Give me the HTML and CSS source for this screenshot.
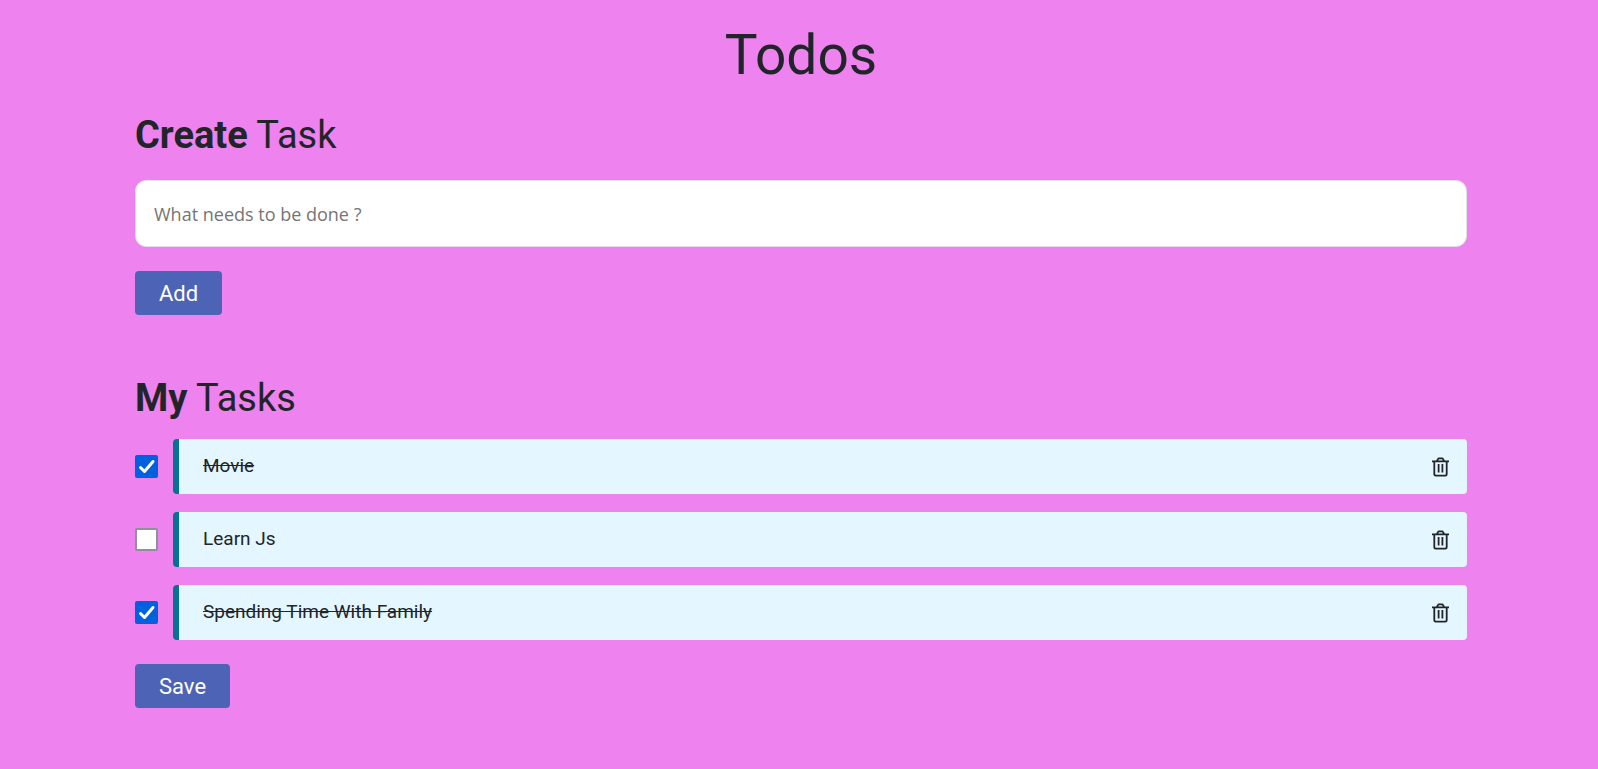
FILE: index.html
```html
<!DOCTYPE html>
<html lang="en">
<head>
<meta charset="utf-8">
<title>Todos</title>
<link rel="stylesheet" href="styles.css">
</head>
<body>
<svg class="sprite" aria-hidden="true">
  <symbol id="trash" viewBox="0 0 17 20">
    <g fill="none" stroke="currentColor" stroke-width="1.800">
      <path d="M0 4.300h17M2.300 4.300v12.700q0 1.600 1.600 1.600h9.200q1.600 0 1.600-1.600V4.300M5 4l.9-1.900q.3-.7 1-.7h3.200q.7 0 1 .7L12 4"/>
      <path d="M6.600 7v8.500M10.400 7v8.500"/>
    </g>
  </symbol>
</svg>
<main class="container">
  <h1 class="page-title">Todos</h1>
  <form class="create">
    <h2 class="section-title"><label for="task"><strong>Create</strong> Task</label></h2>
    <input class="task-input" id="task" type="text" placeholder="What needs to be done ?">
    <button class="button" type="button">Add</button>
  </form>
  <section class="tasks">
    <h2 class="section-title"><strong>My</strong> Tasks</h2>
    <ul class="task-list">
      <li class="task">
        <input class="task-check" id="t1" type="checkbox" checked>
        <div class="task-card">
          <label class="task-label" for="t1">Movie</label>
          <button class="delete" type="button" aria-label="Delete Movie"><svg class="icon"><use href="#trash"/></svg></button>
        </div>
      </li>
      <li class="task">
        <input class="task-check" id="t2" type="checkbox">
        <div class="task-card">
          <label class="task-label" for="t2">Learn Js</label>
          <button class="delete" type="button" aria-label="Delete Learn Js"><svg class="icon"><use href="#trash"/></svg></button>
        </div>
      </li>
      <li class="task">
        <input class="task-check" id="t3" type="checkbox" checked>
        <div class="task-card">
          <label class="task-label" for="t3">Spending Time With Family</label>
          <button class="delete" type="button" aria-label="Delete Spending Time With Family"><svg class="icon"><use href="#trash"/></svg></button>
        </div>
      </li>
    </ul>
    <button class="button" type="button">Save</button>
  </section>
</main>
</body>
</html>
```
FILE: styles.css
```css
* {
  box-sizing: border-box;
}

body {
  margin: 0;
  padding-left: 4px;
  background: #ee82ee;
  color: #212529;
  font-family: Roboto, sans-serif;
  font-size: 19px;
  line-height: 28px;
}

.sprite {
  display: none;
}

.container {
  max-width: 1368px;
  margin: 0 auto;
  padding: 22px 18px;
}

.page-title {
  margin: 0 0 24px;
  font-size: 55px;
  font-weight: 400;
  line-height: 66px;
  text-align: center;
}

.section-title {
  margin: 0 0 22px;
  font-size: 38px;
  font-weight: 400;
  line-height: 46px;
}

.create {
  margin-bottom: 60px;
}

.task-input {
  display: block;
  width: 100%;
  height: 67px;
  margin-bottom: 24px;
  padding: 0 18px;
  border: 1px solid #dee2e6;
  border-radius: 11px;
  background: #fff;
  color: #212529;
  font: 18px "Open Sans", sans-serif;
}

.task-input::placeholder {
  color: #757575;
}

.button {
  display: block;
  height: 44px;
  padding: 0 24px;
  border: 0;
  border-radius: 4px;
  background: #4d63b6;
  color: #fff;
  font: 22px Roboto, sans-serif;
}

.tasks .section-title {
  margin-bottom: 18px;
}

.task-list {
  display: grid;
  gap: 18px;
  margin: 0 0 24px;
  padding: 0;
  list-style: none;
}

.task {
  display: flex;
  align-items: center;
  gap: 15px;
}

.task-check {
  width: 23px;
  height: 23px;
  margin: 0;
  appearance: none;
  border: 2px solid #8f8f9d;
  border-radius: 2px;
  background: #fff;
}

.task-check:checked {
  border: 0;
  background: #0061e0 url("data:image/svg+xml,%3Csvg xmlns='http://www.w3.org/2000/svg' viewBox='0 0 23 23'%3E%3Cpath d='M5.500 12.500l4 4L18 6.500' fill='none' stroke='white' stroke-width='3' stroke-linecap='round' stroke-linejoin='round'/%3E%3C/svg%3E");
}

.task-card {
  display: flex;
  flex: 1;
  align-items: center;
  justify-content: space-between;
  height: 55px;
  padding: 0 18px 0 24px;
  border-left: 6px solid #077193;
  border-radius: 4px;
  background: #e4f6ff;
}

.task-label {
  padding-bottom: 2px;
}

.task-check:checked + .task-card .task-label {
  text-decoration: line-through;
}

.delete {
  display: flex;
  padding: 0;
  border: 0;
  background: none;
  color: #212529;
}

.icon {
  width: 17px;
  height: 20px;
}
```
